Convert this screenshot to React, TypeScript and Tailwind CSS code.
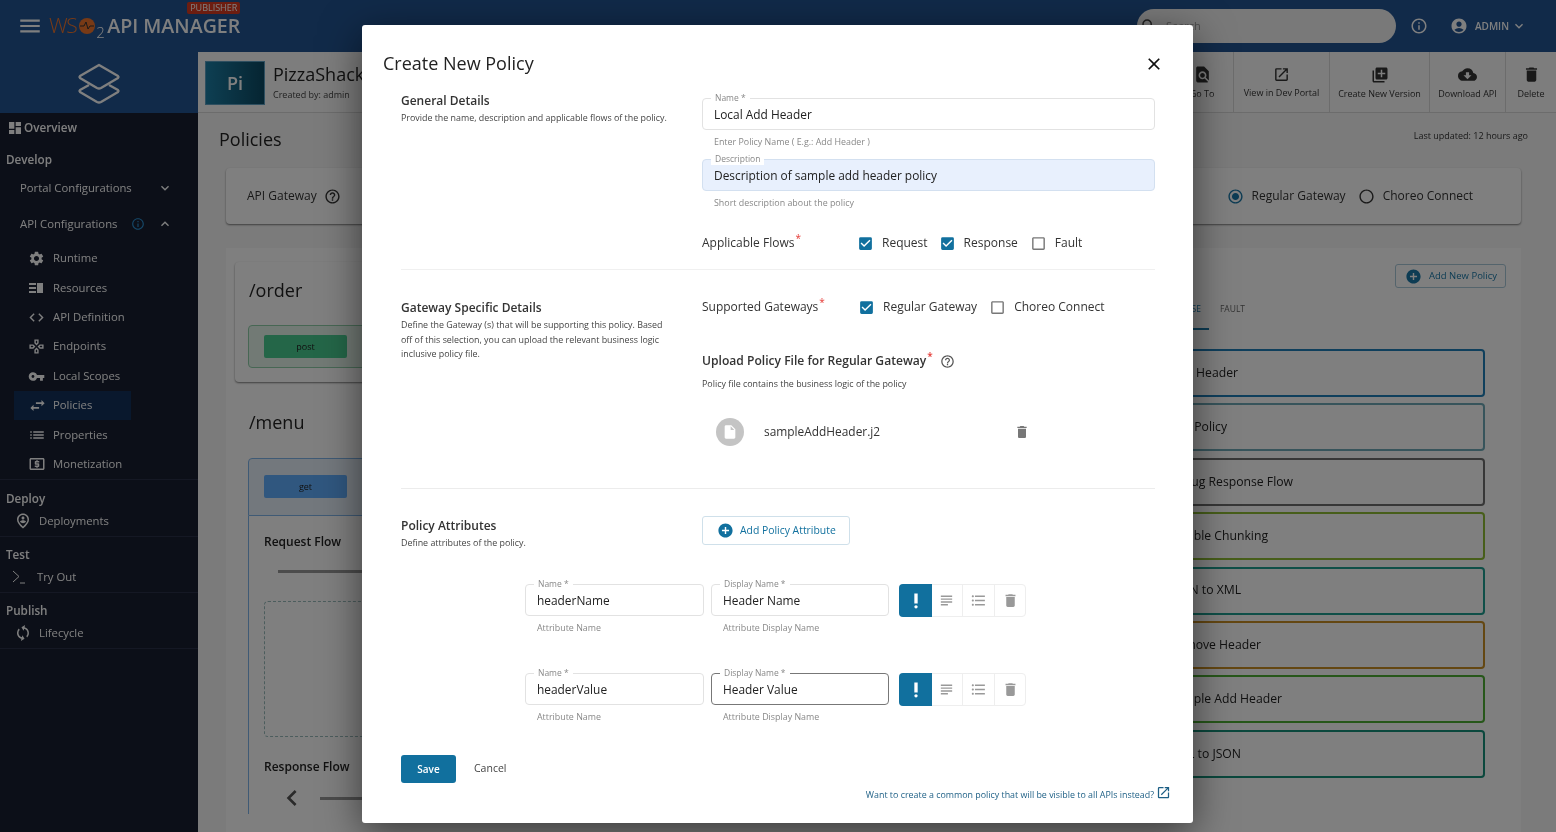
import type { ReactNode } from 'react';
import {
  MdAccountCircle, MdAddCircle, MdCheckBox, MdCheckBoxOutlineBlank, MdClose, MdCloudDownload, MdCode,
  MdDashboard, MdDelete, MdExpandLess, MdExpandMore, MdFindInPage, MdFormatListBulleted, MdOutlineGames,
  MdHelpOutline, MdInfoOutline, MdInsertDriveFile, MdLaunch, MdLibraryAdd, MdList, MdLocalAtm, MdMenu,
  MdOutlinePersonPinCircle, MdPriorityHigh, MdRadioButtonChecked, MdRadioButtonUnchecked, MdSearch,
  MdSettings, MdSubject, MdSwapHoriz, MdSync, MdVpnKey, MdChevronLeft,
} from 'react-icons/md';

const ResourcesIcon = () => (
  <svg width="16" height="16" viewBox="0 0 16 16" fill="#fff">
    <path d="M1 3h7v2H1zM1 7h7v2H1zM1 11h7v2H1zM9 3h6v10H9z" />
  </svg>
);

const subItems = [
  { label: 'Runtime', icon: <MdSettings size={17} /> },
  { label: 'Resources', icon: <ResourcesIcon /> },
  { label: 'API Definition', icon: <MdCode size={17} /> },
  { label: 'Endpoints', icon: <MdOutlineGames size={17} /> },
  { label: 'Local Scopes', icon: <MdVpnKey size={17} /> },
  { label: 'Policies', icon: <MdSwapHoriz size={19} />, active: true },
  { label: 'Properties', icon: <MdList size={18} /> },
  { label: 'Monetization', icon: <MdLocalAtm size={18} /> },
];

const toolbar = [
  { label: 'View in Dev Portal', icon: <MdLaunch size={17} />, w: 'w-[96px]' },
  { label: 'Create New Version', icon: <MdLibraryAdd size={18} />, w: 'w-[100px]' },
  { label: 'Download API', icon: <MdCloudDownload size={19} />, w: 'w-[76px]' },
  { label: 'Delete', icon: <MdDelete size={19} />, w: 'w-[51px]' },
];

const policies = [
  { name: 'Add Header', border: 'border-[#1f7fb8]', w: 'w-[238px]' },
  { name: 'Add Log Policy', border: 'border-[#6fa9b6]', w: 'w-[227px]' },
  { name: 'Debug Response Flow', border: 'border-[#6e6e6e]', w: 'w-[293px]' },
  { name: 'Disable Chunking', border: 'border-[#8fbd34]', w: 'w-[268px]' },
  { name: 'JSON to XML', border: 'border-[#1f9f90]', w: 'w-[241px]' },
  { name: 'Remove Header', border: 'border-[#c98f24]', w: 'w-[261px]' },
  { name: 'Sample Add Header', border: 'border-[#4fae35]', w: 'w-[282px]' },
  { name: 'XML to JSON', border: 'border-[#16907a]', w: 'w-[241px]' },
];

const NavRow = ({ icon, label }: { icon: ReactNode; label: string }) => (
  <div className="flex h-[30px] items-center pl-[14px] text-[11.3px] text-white">
    <span className="flex w-[25px] justify-start">{icon}</span>
    {label}
  </div>
);

const SectionTitle = ({ children }: { children: ReactNode }) => (
  <div className="pl-[6px] text-[11.7px] leading-[16px] font-semibold text-white">{children}</div>
);

const Sidebar = () => (
  <aside className="flex w-[198px] shrink-0 flex-col bg-[#181e30]">
    <div className="flex h-[61px] items-center justify-center bg-[#225593]">
      <svg width="44" height="44" viewBox="0 0 44 44" fill="none" stroke="#fff" strokeWidth="2.4" strokeLinejoin="round">
        <path d="M22 4 L41 15 Q42 16 41 17 L24 27 Q22 28 20 27 L3 17 Q2 16 3 15 Z" />
        <path d="M12 24 L3 29 Q2 30 3 31 L20 41 Q22 42 24 41 L41 31 Q42 30 41 29 L32 24" />
      </svg>
    </div>
    <div className="flex h-[30px] items-center gap-px pl-[7px] text-[11.7px] font-semibold text-white">
      <MdDashboard size={16} />
      Overview
    </div>
    <div className="flex h-[34px] items-center pl-[6px] text-[11.7px] font-semibold text-white">Develop</div>
    <div className="flex h-[22px] items-center justify-between pr-[25px] pl-[20px] text-[11.3px] text-white">
      Portal Configurations
      <MdExpandMore size={16} />
    </div>
    <div className="mt-[14px] flex h-[22px] items-center pr-[25px] pl-[20px] text-[11.3px] text-white">
      API Configurations
      <MdInfoOutline size={14} className="ml-[14px] text-[#2b8fd0]" />
      <MdExpandLess size={16} className="ml-auto" />
    </div>
    <div className="mt-[9px] flex flex-col border-b border-[#2a3148]">
      {subItems.map((item) => (
        <div
          key={item.label}
          className={`ml-[14px] flex h-[29.4px] w-[117px] items-center pl-[14px] text-[11.3px] whitespace-nowrap text-white ${
            item.active ? 'bg-[#12305a]' : ''
          }`}
        >
          <span className="flex w-[25px] justify-start">{item.icon}</span>
          {item.label}
        </div>
      ))}
    </div>
    <div className="border-b border-[#2a3148] pt-[10px]">
      <SectionTitle>Deploy</SectionTitle>
      <NavRow icon={<MdOutlinePersonPinCircle size={18} />} label="Deployments" />
    </div>
    <div className="border-b border-[#2a3148] pt-[9px]">
      <SectionTitle>Test</SectionTitle>
      <div className="flex h-[30px] items-center pl-[12px] text-[11.3px] text-white">
        <svg className="mr-[11px]" width="14" height="14" viewBox="0 0 14 14" fill="none" stroke="#fff" strokeWidth="1">
          <path d="M1 1 L7 6.5 L1 12 M8 13 H13" />
        </svg>
        Try Out
      </div>
    </div>
    <div className="border-b border-[#2a3148] pt-[9px]">
      <SectionTitle>Publish</SectionTitle>
      <NavRow icon={<MdSync size={18} className="rotate-[15deg]" />} label="Lifecycle" />
    </div>
  </aside>
);

const TopBar = () => (
  <header className="flex h-[52px] shrink-0 items-center bg-[#225593] text-white">
    <MdMenu size={26} className="ml-[17px]" />
    <div className="ml-[6px] flex items-center text-[21px] tracking-[-1.5px] text-[#f0742c]">
      <span className="font-light">WS</span>
      <svg className="ml-[2px]" width="18" height="18" viewBox="0 0 18 18">
        <circle cx="9" cy="9" r="8" fill="#f0742c" />
        <path d="M2 9 H6 L8 5 L10 12 L12 9 H16" fill="none" stroke="#333" strokeWidth="1" />
      </svg>
      <span className="mt-[13px] text-[15px] font-light text-white">2</span>
    </div>
    <div className="relative ml-[4px] text-[19.6px] font-semibold text-white">
      API MANAGER
      <span className="absolute -top-[9px] right-0 rounded-[2px] bg-[#d83a20] px-[3px] text-[9px] leading-[12px] font-normal">
        PUBLISHER
      </span>
    </div>
    <div className="ml-auto flex h-[34px] w-[259px] items-center rounded-full bg-[#f2f2f2] pl-[3px] text-[11px] text-[#999]">
      <MdSearch size={18} className="text-[#444]" />
      <span className="ml-[8px]">Search</span>
    </div>
    <MdInfoOutline size={18} className="ml-[14px]" />
    <MdAccountCircle size={18} className="ml-[22px]" />
    <span className="ml-[7px] text-[10px] font-semibold">ADMIN</span>
    <MdExpandMore size={16} className="mr-[29px] ml-[2px]" />
  </header>
);

const SubHeader = () => (
  <div className="flex h-[61px] shrink-0 items-stretch border-b border-[#d8d8d8] bg-[#fafafa]">
    <div className="mt-[9px] ml-[7px] flex h-[44px] w-[60px] items-center justify-center border border-[#5d9ec0] bg-gradient-to-r from-[#1c7fa6] to-[#0c4a64] text-[18px] font-semibold text-white">
      Pi
    </div>
    <div className="ml-[8px] pt-[10px]">
      <div className="text-[18px] leading-[24px] text-[#222]">PizzaShack</div>
      <div className="mt-[3px] text-[9px] leading-[12px] text-[#444]">Created by: admin</div>
    </div>
    <div className="ml-auto flex">
      <div className="flex w-[62px] flex-col items-center justify-center pt-[2px] text-[9px] text-[#333]">
        <MdFindInPage size={19} />
        <span className="mt-[3px]">Go To</span>
      </div>
      {toolbar.map((tool) => (
        <div
          key={tool.label}
          className={`flex ${tool.w} flex-col items-center justify-center border-l border-[#d8d8d8] pt-[2px] text-[9px] text-[#333]`}
        >
          {tool.icon}
          <span className="mt-[3px] whitespace-nowrap">{tool.label}</span>
        </div>
      ))}
    </div>
  </div>
);

const MainContent = () => (
  <main className="flex min-w-0 flex-1 flex-col overflow-hidden bg-[#f7f7f7]">
    <SubHeader />
    <div className="flex h-[55px] shrink-0 items-center justify-between pr-[28px] pl-[21px]">
      <h2 className="mb-[2px] text-[18px] text-[#222]">Policies</h2>
      <span className="mb-[9px] text-[9px] text-[#333]">Last updated: 12 hours ago</span>
    </div>
    <div className="ml-[28px] flex h-[56px] w-[1295px] shrink-0 items-center rounded-[4px] bg-white pr-[48px] pl-[21px] text-[12px] text-[#333] shadow-[0_1px_2px_rgba(0,0,0,0.5)]">
      API Gateway
      <MdHelpOutline size={17} className="ml-[7px]" />
      <div className="ml-auto flex items-center">
        <MdRadioButtonChecked size={17} className="text-[#1a78a8]" />
        <span className="ml-[8px]">Regular Gateway</span>
        <MdRadioButtonUnchecked size={17} className="ml-[12px]" />
        <span className="ml-[8px]">Choreo Connect</span>
      </div>
    </div>
    <div className="mt-[24px] ml-[28px] flex h-[600px] w-[1295px] shrink-0 bg-white">
      <div className="w-[700px] pt-[14px] pl-[9px]">
        <div className="h-[120px] rounded-[4px] bg-white pt-[16px] pl-[13px] shadow-[0_1px_2px_rgba(0,0,0,0.5)]">
          <div className="ml-px text-[18px] leading-[24px] text-[#222]">/order</div>
          <div className="mt-[23px] flex h-[43px] items-center rounded-[4px] border border-[#8ecfa9] bg-[#e4f5ea] pl-[15px]">
            <div className="flex h-[23px] w-[83px] items-center justify-center rounded-[2px] bg-[#49cc90] text-[9px] text-[#222]">post</div>
          </div>
        </div>
        <div className="mt-[13px] rounded-[4px] bg-white pt-[15px] pl-[13px]">
          <div className="ml-px text-[18px] leading-[24px] text-[#222]">/menu</div>
          <div className="mt-[24px] h-[58px] rounded-t-[4px] border border-[#7fb5ea] bg-[#e6f0fb] pt-[16px] pl-[15px]">
            <div className="flex h-[23px] w-[83px] items-center justify-center rounded-[2px] bg-[#61affe] text-[9px] text-[#222]">get</div>
          </div>
          <div className="border-l border-[#7fb5ea] pt-[17px] pl-[15px]">
            <div className="text-[12px] leading-[18px] font-semibold text-[#222]">Request Flow</div>
            <div className="mt-[19px] ml-[14px] h-[3px] bg-[#999]" />
            <div className="mt-[28px] h-[136px] rounded-[4px] border border-dashed border-[#9bb]" />
            <div className="mt-[21px] text-[12px] leading-[18px] font-semibold text-[#222]">Response Flow</div>
            <div className="mt-[6px] flex items-center text-[#555]">
              <MdChevronLeft size={32} className="ml-[12px]" />
              <div className="ml-[12px] h-[3px] flex-1 bg-[#999]" />
            </div>
          </div>
        </div>
      </div>
      <div className="flex flex-1 flex-col pt-[16px]">
        <div className="flex justify-end pr-[15px]">
          <div className="flex h-[24px] w-[111px] items-center rounded-[3px] border border-[#a8c8d8] pl-[9px] text-[9.5px] text-[#1a78a8]">
            <MdAddCircle size={17} />
            <span className="ml-[7px] whitespace-nowrap">Add New Policy</span>
          </div>
        </div>
        <div className="mt-[12px] flex h-[28px] items-center justify-end pr-[276px] pb-[10px] text-[8.5px] text-[#666]">
          <span className="mr-[19px] text-[#1a78a8]">RESPONSE</span>
          FAULT
        </div>
        <div className="ml-[150px] h-[2px] w-[133px] bg-[#1a78a8]" />
        <div className="mt-[19px] flex flex-col gap-[6.4px] pr-[36px] pl-[74px]">
          {policies.map((policy) => (
            <div key={policy.name} className={`flex h-[48px] items-center rounded-[4px] border-2 ${policy.border}`}>
              <span className={`${policy.w} -ml-[2px] text-right text-[12.2px] whitespace-nowrap text-[#222]`}>{policy.name}</span>
            </div>
          ))}
        </div>
      </div>
    </div>
  </main>
);

const Outlined = ({
  label, value, className, focused, filled,
}: {
  label: string; value: string; className: string; focused?: boolean; filled?: boolean;
}) => (
  <div
    className={`relative flex h-[32px] items-center rounded-[4px] border pt-[2px] pl-[11px] text-[11.9px] text-[#222] ${className} ${
      focused ? 'border-[#777]' : filled ? 'border-[#d3e0f0] bg-[#e8f0fd]' : 'border-[#e2e2e2] bg-white'
    }`}
  >
    <span className="absolute -top-[7px] left-[8px] bg-white px-[4px] text-[8.5px] leading-[12px] text-[#888]">{label}</span>
    {value}
  </div>
);

const Helper = ({ children }: { children: ReactNode }) => (
  <div className="mt-[4px] pl-[12px] text-[8.9px] leading-[15px] text-[#888]">{children}</div>
);

const Req = () => <sup className="-top-[5px] ml-px text-[10px] text-[#e53935]">*</sup>;

const Check = ({ on, label, className }: { on?: boolean; label: string; className: string }) => (
  <div className={`flex items-center text-[12px] text-[#333] ${className}`}>
    {on ? <MdCheckBox size={17} className="text-[#11709e]" /> : <MdCheckBoxOutlineBlank size={17} className="text-[#777]" />}
    <span className="ml-[8px]">{label}</span>
  </div>
);

const AttributeRow = ({ name, display, focused }: { name: string; display: string; focused?: boolean }) => (
  <div className="ml-[124px] flex">
    <div className="w-[179px]">
      <Outlined label="Name *" value={name} className="w-[179px]" />
      <Helper>Attribute Name</Helper>
    </div>
    <div className="ml-[7px] w-[178px]">
      <Outlined label="Display Name *" value={display} className="w-[178px]" focused={focused} />
      <Helper>Attribute Display Name</Helper>
    </div>
    <div className="ml-[10px] flex h-[33px] w-[127px] rounded-[4px] border border-[#eee]">
      <div className="-m-px flex h-[33px] w-[33px] items-center justify-center rounded-l-[4px] bg-[#11709e] text-white">
        <MdPriorityHigh size={20} />
      </div>
      <div className="flex w-[32px] items-center justify-center border-r border-[#eee] text-[#999]">
        <MdSubject size={17} />
      </div>
      <div className="flex w-[32px] items-center justify-center border-r border-[#eee] text-[#999]">
        <MdFormatListBulleted size={17} />
      </div>
      <div className="flex flex-1 items-center justify-center text-[#999]">
        <MdDelete size={17} />
      </div>
    </div>
  </div>
);

const Dialog = () => (
  <div className="absolute top-[25px] left-[362px] h-[798px] w-[831px] rounded-[3px] bg-white shadow-[0_10px_40px_rgba(0,0,0,0.55)]">
    <div className="flex h-[67px] items-center justify-between pt-[10px] pr-[29px] pl-[21px]">
      <h1 className="text-[18px] text-[#222]">Create New Policy</h1>
      <MdClose size={20} className="text-[#111]" />
    </div>
    <div className="pr-[38px] pl-[39px]">
      <section className="grid grid-cols-[301px_1fr]">
        <div className="pt-px">
          <h3 className="text-[12px] leading-[16px] font-semibold text-[#333]">General Details</h3>
          <p className="mt-px text-[8.9px] leading-[16px] text-[#444]">Provide the name, description and applicable flows of the policy.</p>
        </div>
        <div className="pt-[6px]">
          <Outlined label="Name *" value="Local Add Header" className="w-full" />
          <Helper>Enter Policy Name ( E.g.: Add Header )</Helper>
          <div className="mt-[10px]">
            <Outlined label="Description" value="Description of sample add header policy" className="w-full" filled />
          </div>
          <Helper>Short description about the policy</Helper>
          <div className="mt-[21px] flex h-[24px] items-center">
            <span className="w-[155px] text-[12px] text-[#333]">Applicable Flows<Req /></span>
            <Check on label="Request" className="" />
            <Check on label="Response" className="ml-[11px]" />
            <Check label="Fault" className="ml-[12px]" />
          </div>
        </div>
      </section>
      <div className="mt-[14px] border-t border-[#f0f0f0]" />

      <section className="grid grid-cols-[301px_1fr]">
        <div className="pt-[30px]">
          <h3 className="text-[12px] leading-[16px] font-semibold text-[#333]">Gateway Specific Details</h3>
          <p className="mt-[2px] w-[270px] text-[8.9px] leading-[14.5px] text-[#444]">
            Define the Gateway (s) that will be supporting this policy. Based off of this selection, you can upload the relevant business logic inclusive policy file.
          </p>
        </div>
        <div className="pt-[25px]">
          <div className="flex h-[24px] items-center">
            <span className="w-[157px] text-[12px] text-[#333]">Supported Gateways<Req /></span>
            <Check on label="Regular Gateway" className="-ml-px" />
            <Check label="Choreo Connect" className="ml-[12px]" />
          </div>
          <div className="mt-[33px] flex h-[18px] items-center text-[12.1px] font-semibold text-[#333]">
            Upload Policy File for Regular Gateway<Req />
            <MdHelpOutline size={15} className="ml-[7px] font-normal text-[#555]" />
          </div>
          <div className="mt-[6px] text-[8.9px] leading-[16px] text-[#444]">Policy file contains the business logic of the policy</div>
          <div className="mt-[26px] flex h-[28px] items-center pl-[14px]">
            <div className="flex size-[28px] items-center justify-center rounded-full bg-[#c4c4c4]">
              <MdInsertDriveFile size={16} className="text-white" />
            </div>
            <span className="ml-[20px] w-[250px] text-[11.9px] text-[#333]">sampleAddHeader.j2</span>
            <MdDelete size={16} className="text-[#777]" />
          </div>
        </div>
      </section>
      <div className="mt-[42px] border-t border-[#ececec]" />

      <section className="grid grid-cols-[301px_1fr]">
        <div className="pt-[29px]">
          <h3 className="text-[12px] leading-[16px] font-semibold text-[#333]">Policy Attributes</h3>
          <p className="mt-px text-[8.9px] leading-[16px] text-[#444]">Define attributes of the policy.</p>
        </div>
        <div className="pt-[27px]">
          <div className="flex h-[29px] w-[148px] items-center rounded-[3px] border border-[#cfe0ea] pl-[14px] text-[10.4px] text-[#11709e]">
            <MdAddCircle size={17} />
            <span className="ml-[6px] whitespace-nowrap">Add Policy Attribute</span>
          </div>
        </div>
      </section>

      <div className="mt-[33px]">
        <AttributeRow name="headerName" display="Header Name" />
      </div>
      <div className="mt-[38px]">
        <AttributeRow name="headerValue" display="Header Value" focused />
      </div>

      <div className="mt-[31px] flex items-center">
        <div className="flex h-[28px] w-[55px] items-center justify-center rounded-[3px] bg-[#11709e] text-[10px] font-semibold text-white">Save</div>
        <span className="ml-[18px] text-[10.5px] text-[#444]">Cancel</span>
      </div>
      <div className="mt-[3px] -mr-[16px] flex h-[18px] items-center justify-end text-[8.9px] text-[#1d5f85]">
        Want to create a common policy that will be visible to all APIs instead?
        <MdLaunch size={15} className="mb-[5px] ml-[2px]" />
      </div>
    </div>
  </div>
);

export default function App() {
  return (
    <div className="relative flex h-[832px] w-[1556px] flex-col overflow-hidden bg-white font-['Open_Sans',sans-serif] blur-[0.4px]">
      <TopBar />
      <div className="flex min-h-0 flex-1">
        <Sidebar />
        <MainContent />
      </div>
      {/* modal backdrop */}
      <div className="absolute inset-0 bg-black/50" />
      <Dialog />
    </div>
  );
}
